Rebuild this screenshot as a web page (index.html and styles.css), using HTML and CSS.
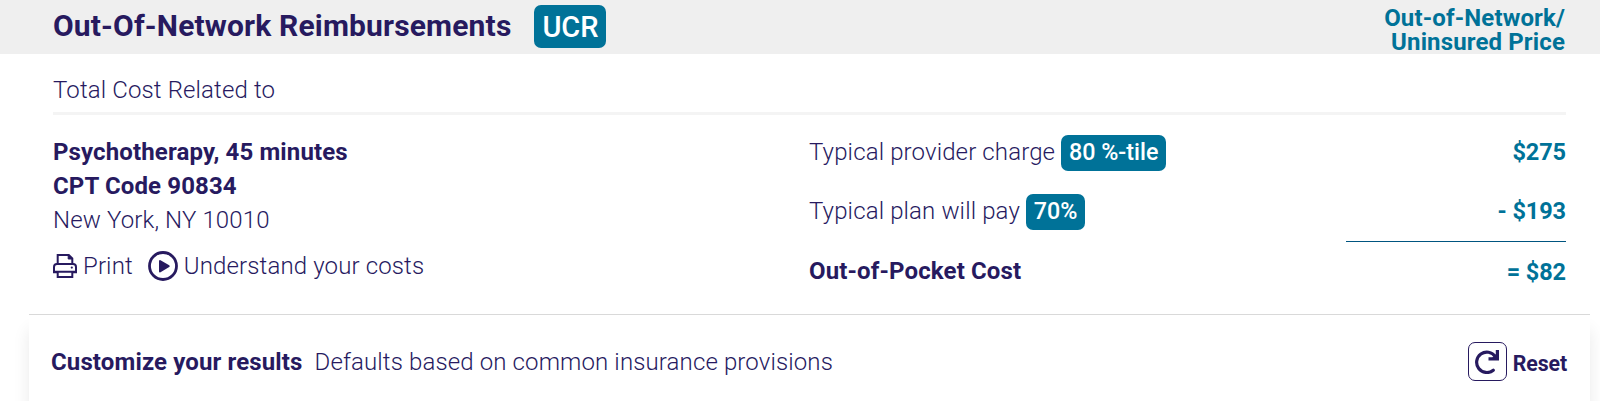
FILE: index.html
```html
<!DOCTYPE html>
<html lang="en">
<head>
    <meta charset="UTF-8">
    <meta name="viewport" content="width=device-width, initial-scale=1.0">
    <title>Out-Of-Network Reimbursements</title>
    <link rel="stylesheet" href="styles.css">
</head>
<body>
    <header class="cost-header">
        <div class="header-left">
            <h1>Out-Of-Network Reimbursements</h1>
            <span class="badge badge-large">UCR</span>
        </div>
        <h2>Out-of-Network/<br>Uninsured Price</h2>
    </header>
    <main class="container">
        <p class="related">Total Cost Related to</p>
        <div class="cost-body">
            <section class="procedure">
                <p class="strong">Psychotherapy, 45 minutes</p>
                <p class="strong">CPT Code 90834</p>
                <p>New York, NY 10010</p>
                <div class="links">
                    <a href="#print" class="print-link">
                        <svg class="print-icon" viewBox="0 0 24 24" fill="none" stroke="currentColor" stroke-width="2">
                            <path d="M4.7 10V1h11.1l3.5 3.5V10"/>
                            <path d="M15.2 1v4h4.1z" fill="currentColor" stroke-width="1"/>
                            <path d="M4.5 18.2H1V13a3 3 0 0 1 3-3h16a3 3 0 0 1 3 3v5.2h-3.5"/>
                            <path d="M4.7 17.8V23h14.6v-5.2M2 17.8h20"/>
                            <circle cx="18.8" cy="13.6" r="1.1" fill="currentColor" stroke="none"/>
                        </svg>
                        <span>Print</span>
                    </a>
                    <a href="#costs" class="costs-link">
                        <svg class="play-icon" viewBox="0 0 30 30" fill="none">
                            <circle cx="15" cy="15" r="13.5" stroke="currentColor" stroke-width="2.8"/>
                            <path d="M12 10v10.4l8.7-5.2z" fill="currentColor" stroke="currentColor" stroke-width="2" stroke-linejoin="round"/>
                        </svg>
                        <span>Understand your costs</span>
                    </a>
                </div>
            </section>
            <section class="charges">
                <div class="charge-row">
                    <span class="charge-text">Typical provider charge</span>
                    <span class="badge badge-tile">80 %-tile</span>
                    <span class="amount">$275</span>
                </div>
                <div class="charge-row">
                    <span class="charge-text">Typical plan will pay</span>
                    <span class="badge badge-pay">70%</span>
                    <span class="amount">- $193</span>
                </div>
                <div class="total-line"></div>
                <div class="charge-row">
                    <span class="strong">Out-of-Pocket Cost</span>
                    <span class="amount total-amount">= $82</span>
                </div>
            </section>
        </div>
    </main>
    <section class="customize">
        <div class="customize-left">
            <strong>Customize your results</strong>
            <span>Defaults based on common insurance provisions</span>
        </div>
        <button class="reset">
            <span class="reset-box">
                <svg class="reset-icon" viewBox="0 0 24 24" fill="none" stroke="currentColor" stroke-width="3.2">
                    <path d="M18.3 20.2A10.2 10.2 0 1 1 20.3 6.6" stroke-linecap="round"/>
                    <path d="M22.4 0v8.8H13.5"/>
                    <path d="M22 3v6h-6z" fill="currentColor" stroke="none"/>
                </svg>
            </span>
            <span class="reset-text">Reset</span>
        </button>
    </section>
</body>
</html>
```
FILE: styles.css
```css
* {
    box-sizing: border-box;
}
body {
    font-family: Roboto, Arial, sans-serif;
    margin: 0;
    height: 401px;
    overflow: hidden;
    color: #271a5f;
    background-color: #fff;
    font-size: 24px;
    font-weight: 300;
    line-height: 34px;
    letter-spacing: 0.13px;
}
h1, h2, p {
    margin: 0;
}
a {
    color: inherit;
    text-decoration: none;
}
svg {
    display: block;
    flex: none;
}
.strong, strong {
    font-weight: 700;
}
.cost-header {
    display: flex;
    justify-content: space-between;
    height: 54px;
    padding: 5px 35px 0 53px;
    background-color: #efefef;
}
.header-left {
    display: flex;
    align-items: flex-start;
    gap: 23px;
}
.cost-header h1 {
    font-size: 30px;
    font-weight: 700;
    line-height: 42px;
    letter-spacing: 0.16px;
    white-space: nowrap;
}
.cost-header h2 {
    padding-top: 1px;
    font-size: 24px;
    font-weight: 700;
    line-height: 24px;
    color: #007298;
    text-align: right;
}
.badge {
    display: flex;
    align-items: center;
    justify-content: center;
    height: 36px;
    border-radius: 7px;
    background-color: #007298;
    color: #fff;
    font-size: 23.3px;
    font-weight: 500;
    letter-spacing: 0;
    white-space: nowrap;
}
.badge-large {
    width: 72px;
    height: 43px;
    font-size: 29px;
}
.container {
    padding: 0 34px 0 53px;
}
.related {
    height: 61px;
    padding-top: 19px;
    border-bottom: 3px solid #f4f4f4;
}
.cost-body {
    display: grid;
    grid-template-columns: 756px 1fr;
    height: 199px;
    padding-top: 20px;
}
.links {
    display: flex;
    padding-top: 11px;
}
.links span {
    padding-top: 1px;
}
.print-link, .costs-link {
    display: flex;
    align-items: center;
}
.print-icon {
    width: 24px;
    height: 24px;
    margin-right: 6px;
}
.costs-link {
    margin-left: 15px;
}
.play-icon {
    width: 30px;
    height: 30px;
    margin-right: 6px;
}
.charge-row {
    display: flex;
    align-items: center;
    height: 36px;
    margin-bottom: 23px;
    gap: 6px;
}
.charge-text, .badge-tile, .badge-pay, .amount {
    padding-bottom: 2px;
}
.badge-tile {
    width: 105px;
}
.badge-pay {
    width: 59px;
}
.amount {
    margin-left: auto;
    color: #007298;
    font-size: 23.5px;
    font-weight: 700;
    letter-spacing: -0.1px;
}
.total-line {
    width: 220px;
    height: 1px;
    margin: -12px 0 11px auto;
    background-color: #005580;
}
.total-amount {
    padding: 2px 0 0;
}
.customize {
    display: flex;
    align-items: flex-start;
    justify-content: space-between;
    height: 87px;
    margin: 0 10px 0 29px;
    padding: 27px 23px 0 22px;
    border-top: 1px solid #d9d9d9;
    box-shadow: 0 16px 16px rgba(0, 0, 0, 0.09);
}
.customize-left {
    display: flex;
    gap: 12px;
    padding-top: 3px;
}
.reset {
    display: flex;
    align-items: center;
    gap: 6px;
    padding: 0;
    border: none;
    background: none;
    color: inherit;
    font-family: inherit;
    font-size: 21.3px;
    font-weight: 700;
    letter-spacing: -0.1px;
    cursor: pointer;
}
.reset-box {
    display: flex;
    align-items: center;
    justify-content: center;
    width: 39px;
    height: 39px;
    border: 1px solid #271a5f;
    border-radius: 7px;
}
.reset-icon {
    width: 24px;
    height: 24px;
}
.reset-text {
    padding-top: 3px;
}
```
